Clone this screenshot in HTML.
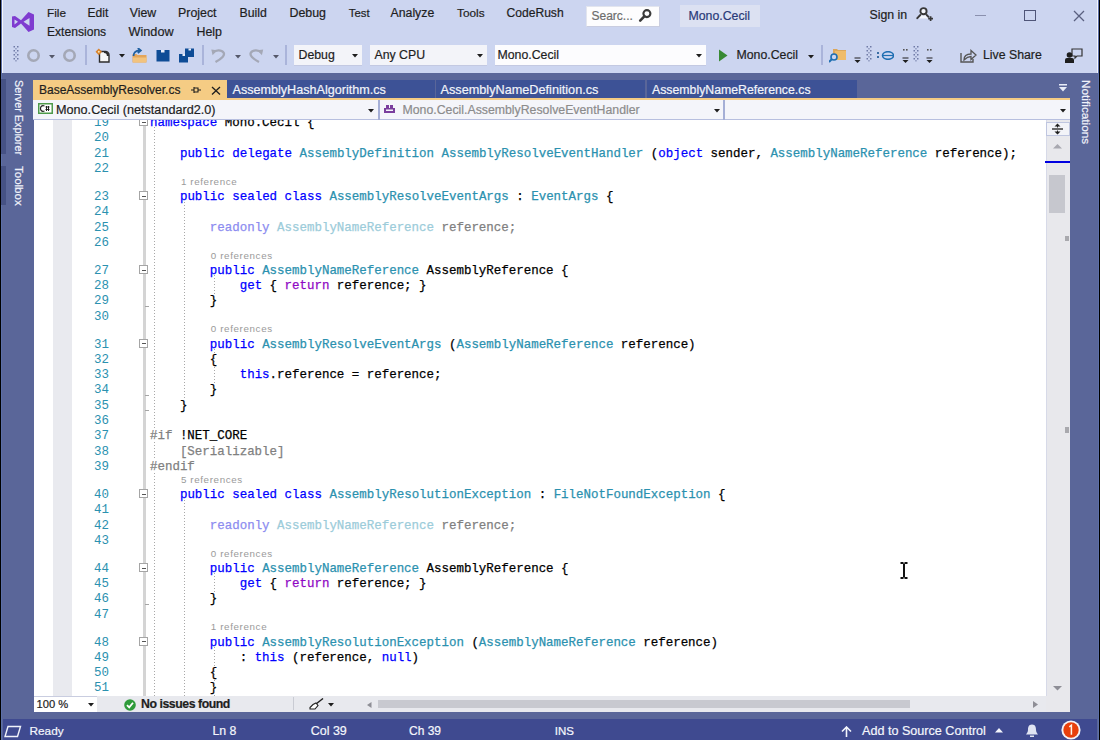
<!DOCTYPE html>
<html><head><meta charset="utf-8"><title>Visual Studio</title>
<style>
html,body{margin:0;padding:0;}
body{width:1100px;height:740px;overflow:hidden;position:relative;background:#5A6699;font-family:'Liberation Sans', sans-serif;}
body div{position:absolute;}
body div span{position:static;}
</style></head><body>
<div style="left:0px;top:0px;width:1100px;height:73px;background:#CCD5F0;"></div>
<svg style="position:absolute;left:10px;top:10px;" width="26" height="24" viewBox="0 0 26 24"><path fill="#7F3CD0" fill-rule="evenodd" d="M2,6.5 L5,6 L11,10.3 L18.5,2 L24,4.5 L24,19.5 L18.5,22 L11,13.5 L5,18 L2,17 Z M4.5,9.5 L8,11.8 L4.5,14.5 Z M13.5,11.8 L19.5,8 L19.5,15.8 Z"/></svg>
<div style="left:47px;top:6px;font-size:11.8px;line-height:14px;color:#1e1e1e;white-space:pre;font-family:'Liberation Sans', sans-serif;-webkit-text-stroke:0.2px #1e1e1e;">File</div>
<div style="left:87.5px;top:6px;font-size:12.1px;line-height:14px;color:#1e1e1e;white-space:pre;font-family:'Liberation Sans', sans-serif;-webkit-text-stroke:0.2px #1e1e1e;">Edit</div>
<div style="left:129.8px;top:6px;font-size:12.3px;line-height:14px;color:#1e1e1e;white-space:pre;font-family:'Liberation Sans', sans-serif;-webkit-text-stroke:0.2px #1e1e1e;">View</div>
<div style="left:178px;top:6px;font-size:12.4px;line-height:14px;color:#1e1e1e;white-space:pre;font-family:'Liberation Sans', sans-serif;-webkit-text-stroke:0.2px #1e1e1e;">Project</div>
<div style="left:239.5px;top:6px;font-size:12.3px;line-height:14px;color:#1e1e1e;white-space:pre;font-family:'Liberation Sans', sans-serif;-webkit-text-stroke:0.2px #1e1e1e;">Build</div>
<div style="left:289.5px;top:6px;font-size:12.4px;line-height:14px;color:#1e1e1e;white-space:pre;font-family:'Liberation Sans', sans-serif;-webkit-text-stroke:0.2px #1e1e1e;">Debug</div>
<div style="left:348.8px;top:7px;font-size:11.4px;line-height:12px;color:#1e1e1e;white-space:pre;font-family:'Liberation Sans', sans-serif;-webkit-text-stroke:0.2px #1e1e1e;">Test</div>
<div style="left:390.5px;top:6px;font-size:12.3px;line-height:14px;color:#1e1e1e;white-space:pre;font-family:'Liberation Sans', sans-serif;-webkit-text-stroke:0.2px #1e1e1e;">Analyze</div>
<div style="left:457px;top:6px;font-size:11.8px;line-height:14px;color:#1e1e1e;white-space:pre;font-family:'Liberation Sans', sans-serif;-webkit-text-stroke:0.2px #1e1e1e;">Tools</div>
<div style="left:506.5px;top:6px;font-size:12.1px;line-height:14px;color:#1e1e1e;white-space:pre;font-family:'Liberation Sans', sans-serif;-webkit-text-stroke:0.2px #1e1e1e;">CodeRush</div>
<div style="left:47px;top:25px;font-size:12.1px;line-height:14px;color:#1e1e1e;white-space:pre;font-family:'Liberation Sans', sans-serif;-webkit-text-stroke:0.2px #1e1e1e;">Extensions</div>
<div style="left:128.5px;top:25px;font-size:12.7px;line-height:14px;color:#1e1e1e;white-space:pre;font-family:'Liberation Sans', sans-serif;-webkit-text-stroke:0.2px #1e1e1e;">Window</div>
<div style="left:196.5px;top:25px;font-size:12.4px;line-height:14px;color:#1e1e1e;white-space:pre;font-family:'Liberation Sans', sans-serif;-webkit-text-stroke:0.2px #1e1e1e;">Help</div>
<div style="left:586px;top:6px;width:73.5px;height:20.5px;background:#FDFDFE;border:1px solid #E2E5EE;border-right-color:#C9CDE0;border-bottom-color:#C9CDE0;box-sizing:border-box"></div>
<div style="left:591.5px;top:9px;font-size:12px;line-height:14px;color:#6D6D6D;white-space:pre;font-family:'Liberation Sans', sans-serif;-webkit-text-stroke:0.2px #6D6D6D;">Searc...</div>
<svg style="position:absolute;left:636px;top:9px;" width="16" height="14" viewBox="0 0 16 14"><circle cx="10.9" cy="4.6" r="3.5" fill="none" stroke="#3A3A3A" stroke-width="2.1"/><path d="M8.3,7.3 L4.2,11.6" stroke="#3A3A3A" stroke-width="2.6" stroke-linecap="round"/></svg>
<div style="left:680px;top:5px;width:80px;height:22px;background:#DCE1F2;"></div>
<div style="left:688.5px;top:9px;font-size:12.3px;line-height:14px;color:#2A3A78;white-space:pre;font-family:'Liberation Sans', sans-serif;-webkit-text-stroke:0.2px #2A3A78;">Mono.Cecil</div>
<div style="left:869.5px;top:8px;font-size:12.3px;line-height:14px;color:#1e1e1e;white-space:pre;font-family:'Liberation Sans', sans-serif;-webkit-text-stroke:0.2px #1e1e1e;">Sign in</div>
<svg style="position:absolute;left:916px;top:7px;" width="19" height="16" viewBox="0 0 19 16"><path d="M2.5,11.5 L5,8.3 L10,8.3 L12,11.5 Z" fill="#F4F6FC"/><circle cx="7.5" cy="4.2" r="3.1" fill="#F4F6FC" stroke="#383838" stroke-width="1.9"/><path d="M1.3,11.2 L4.3,8 M10.7,8 L12.5,9.8" stroke="#383838" stroke-width="1.9" stroke-linecap="round"/><path d="M12.2,11.6 h4.8 M14.6,9.2 v4.8" stroke="#383838" stroke-width="1.7"/></svg>
<div style="left:975px;top:15px;width:11px;height:1px;background:#8A90AE;"></div>
<div style="left:1024px;top:10px;width:12px;height:11px;background:none;border:1.5px solid #4F5578;box-sizing:border-box"></div>
<svg style="position:absolute;left:1073px;top:10px;" width="12" height="12" viewBox="0 0 12 12"><path d="M1,1 L11,11 M11,1 L1,11" stroke="#5A6080" stroke-width="1.3"/></svg>
<div style="left:0px;top:0px;width:1px;height:740px;background:#000;"></div>
<div style="left:1px;top:0px;width:1px;height:740px;background:#5B6FA8;"></div>
<div style="left:2px;top:0px;width:1px;height:73px;background:#F4F6FC;"></div>
<div style="left:1099px;top:0px;width:1px;height:740px;background:#000;"></div>
<div style="left:1098px;top:0px;width:1px;height:740px;background:#5B6FA8;"></div>
<div style="left:1097px;top:0px;width:1px;height:73px;background:#F4F6FC;"></div>
<svg style="position:absolute;left:12.5px;top:46px;" width="6" height="18" viewBox="0 0 6 18"><rect x="0.5" y="0" width="1.5" height="1.5" fill="#6F7AA6"/><rect x="4" y="0" width="1.5" height="1.5" fill="#6F7AA6"/><rect x="2.2" y="2" width="1.5" height="1.5" fill="#8E98BE"/><rect x="0.5" y="4" width="1.5" height="1.5" fill="#6F7AA6"/><rect x="4" y="4" width="1.5" height="1.5" fill="#6F7AA6"/><rect x="2.2" y="6" width="1.5" height="1.5" fill="#8E98BE"/><rect x="0.5" y="8" width="1.5" height="1.5" fill="#6F7AA6"/><rect x="4" y="8" width="1.5" height="1.5" fill="#6F7AA6"/><rect x="2.2" y="10" width="1.5" height="1.5" fill="#8E98BE"/><rect x="0.5" y="12" width="1.5" height="1.5" fill="#6F7AA6"/><rect x="4" y="12" width="1.5" height="1.5" fill="#6F7AA6"/><rect x="2.2" y="14" width="1.5" height="1.5" fill="#8E98BE"/></svg>
<svg style="position:absolute;left:27px;top:49px;" width="14" height="13" viewBox="0 0 14 13"><circle cx="6.5" cy="6.5" r="5.2" fill="none" stroke="#A4A8B6" stroke-width="2.6"/></svg>
<svg style="position:absolute;left:48.5px;top:54.5px;" width="6" height="4" viewBox="0 0 6 4"><path d="M0,0 H6 L3.0,3.5 Z" fill="#55586A"/></svg>
<svg style="position:absolute;left:63px;top:49px;" width="14" height="13" viewBox="0 0 14 13"><circle cx="6.5" cy="6.5" r="5.2" fill="none" stroke="#A4A8B6" stroke-width="2.6"/></svg>
<div style="left:85.0px;top:45px;width:2px;height:20px;background:#AAB4DA;"></div>
<svg style="position:absolute;left:95px;top:48px;" width="16" height="15" viewBox="0 0 16 15"><path d="M4.5,3.5 h6 a3.5,3.5 0 0 1 3.5,3.5 v7 h-9.5 z" fill="#F6F6F6" stroke="#2D2D2D" stroke-width="1.4"/><path d="M9,4 a4,4 0 0 1 4,4" fill="none" stroke="#2D2D2D" stroke-width="2.2"/><path d="M3.8,0.5 L7,3.8 L3.8,7.2 L0.5,3.8 Z" fill="#D9822B"/><circle cx="3.8" cy="3.8" r="1" fill="#F6E3B0"/></svg>
<svg style="position:absolute;left:118.5px;top:54px;" width="6" height="4" viewBox="0 0 6 4"><path d="M0,0 H6 L3.0,3.5 Z" fill="#1e1e1e"/></svg>
<svg style="position:absolute;left:131px;top:48px;" width="17" height="15" viewBox="0 0 17 15"><path d="M1.5,6 h4 l1,1 h9 v7.5 h-14 z" fill="#E3A55B"/><path d="M2,9.5 h14 l-1,5 h-13 z" fill="#F2C37E"/><path d="M2.5,8 C2.5,4.5 5,2.5 8.5,2.5 M6.8,0 l3,2.5 l-3,2.5" fill="none" stroke="#1F5FA0" stroke-width="1.8"/></svg>
<svg style="position:absolute;left:156px;top:49px;" width="14" height="13" viewBox="0 0 14 13"><rect x="0.5" y="1" width="13" height="11.5" fill="#0E4C96"/><rect x="5" y="1" width="3.5" height="2.5" fill="#E8ECF8"/></svg>
<svg style="position:absolute;left:178px;top:47px;" width="17" height="16" viewBox="0 0 17 16"><rect x="7" y="1.5" width="9" height="8.5" fill="#0E4C96"/><rect x="10.5" y="1.5" width="2.5" height="2" fill="#E8ECF8"/><rect x="6" y="7" width="4" height="2" fill="#CCD5F0"/><rect x="1" y="7" width="9" height="8.5" fill="#0E4C96"/><rect x="4.5" y="7" width="2.5" height="2" fill="#E8ECF8"/></svg>
<div style="left:202.0px;top:45px;width:2px;height:20px;background:#AAB4DA;"></div>
<svg style="position:absolute;left:211px;top:49px;" width="15" height="14" viewBox="0 0 15 14"><path d="M2,3.8 C4.5,0.8 10.5,0.5 12.6,3.6 C14.2,6.3 11,9.5 4.5,13" fill="none" stroke="#A4A8B6" stroke-width="2.3"/><path d="M0.3,0.5 L6,1.2 L1.6,6.2 Z" fill="#A4A8B6"/></svg>
<svg style="position:absolute;left:235px;top:54.5px;" width="6" height="4" viewBox="0 0 6 4"><path d="M0,0 H6 L3.0,3.5 Z" fill="#55586A"/></svg>
<svg style="position:absolute;left:248.5px;top:49px;" width="15" height="14" viewBox="0 0 15 14"><g transform="translate(14.5,0) scale(-1,1)"><path d="M2,3.8 C4.5,0.8 10.5,0.5 12.6,3.6 C14.2,6.3 11,9.5 4.5,13" fill="none" stroke="#A4A8B6" stroke-width="2.3"/><path d="M0.3,0.5 L6,1.2 L1.6,6.2 Z" fill="#A4A8B6"/></g></svg>
<svg style="position:absolute;left:273px;top:54.5px;" width="6" height="4" viewBox="0 0 6 4"><path d="M0,0 H6 L3.0,3.5 Z" fill="#55586A"/></svg>
<div style="left:285.0px;top:45px;width:2px;height:20px;background:#AAB4DA;"></div>
<div style="left:294px;top:45px;width:68px;height:20.5px;background:#F3F4F9;box-shadow:inset 0 -1px 0 #C3C9E2"></div>
<div style="left:298.5px;top:48px;font-size:12.3px;line-height:14px;color:#1e1e1e;white-space:pre;font-family:'Liberation Sans', sans-serif;-webkit-text-stroke:0.2px #1e1e1e;">Debug</div>
<svg style="position:absolute;left:352px;top:53.5px;" width="6" height="4" viewBox="0 0 6 4"><path d="M0,0 H6 L3.0,3.5 Z" fill="#1e1e1e"/></svg>
<div style="left:370px;top:45px;width:116.5px;height:20.5px;background:#F3F4F9;box-shadow:inset 0 -1px 0 #C3C9E2"></div>
<div style="left:374.5px;top:48px;font-size:12.3px;line-height:14px;color:#1e1e1e;white-space:pre;font-family:'Liberation Sans', sans-serif;-webkit-text-stroke:0.2px #1e1e1e;">Any CPU</div>
<svg style="position:absolute;left:476.5px;top:53.5px;" width="6" height="4" viewBox="0 0 6 4"><path d="M0,0 H6 L3.0,3.5 Z" fill="#1e1e1e"/></svg>
<div style="left:494.5px;top:45px;width:211px;height:20.5px;background:#FCFCFE;box-shadow:inset 0 -1px 0 #C3C9E2"></div>
<div style="left:497.5px;top:48px;font-size:12.3px;line-height:14px;color:#1e1e1e;white-space:pre;font-family:'Liberation Sans', sans-serif;-webkit-text-stroke:0.2px #1e1e1e;">Mono.Cecil</div>
<svg style="position:absolute;left:695.5px;top:53.5px;" width="6" height="4" viewBox="0 0 6 4"><path d="M0,0 H6 L3.0,3.5 Z" fill="#1e1e1e"/></svg>
<svg style="position:absolute;left:718px;top:49px;" width="10" height="13" viewBox="0 0 10 13"><path d="M1,0.5 L9.5,6.5 L1,12.5 Z" fill="#388A34"/></svg>
<div style="left:736.5px;top:48px;font-size:12.3px;line-height:14px;color:#1e1e1e;white-space:pre;font-family:'Liberation Sans', sans-serif;-webkit-text-stroke:0.2px #1e1e1e;">Mono.Cecil</div>
<svg style="position:absolute;left:808px;top:55px;" width="6" height="4" viewBox="0 0 6 4"><path d="M0,0 H6 L3.0,3.5 Z" fill="#1e1e1e"/></svg>
<div style="left:820.5px;top:45px;width:2px;height:20px;background:#AAB4DA;"></div>
<svg style="position:absolute;left:829px;top:47px;" width="18" height="16" viewBox="0 0 18 16"><path d="M4,2 h4 l1,1 h8 v10 h-13z" fill="#DCA75A"/><path d="M6,4 h11 v9 h-11z" fill="#EFBC6A"/><circle cx="5" cy="10" r="3" fill="#CCD5F0" stroke="#1F6FB2" stroke-width="1.6"/><path d="M3,12 l-3,3" stroke="#1F6FB2" stroke-width="2"/></svg>
<svg style="position:absolute;left:853.5px;top:48px;" width="7" height="16" viewBox="0 0 7 16"><rect x="0.5" y="9.5" width="6" height="1" fill="#1e1e1e"/><path d="M0.5,12 h6 l-3,3z" fill="#1e1e1e"/></svg>
<svg style="position:absolute;left:865.5px;top:46px;" width="6" height="18" viewBox="0 0 6 18"><rect x="0.5" y="0" width="1.5" height="1.5" fill="#6F7AA6"/><rect x="4" y="0" width="1.5" height="1.5" fill="#6F7AA6"/><rect x="2.2" y="2" width="1.5" height="1.5" fill="#8E98BE"/><rect x="0.5" y="4" width="1.5" height="1.5" fill="#6F7AA6"/><rect x="4" y="4" width="1.5" height="1.5" fill="#6F7AA6"/><rect x="2.2" y="6" width="1.5" height="1.5" fill="#8E98BE"/><rect x="0.5" y="8" width="1.5" height="1.5" fill="#6F7AA6"/><rect x="4" y="8" width="1.5" height="1.5" fill="#6F7AA6"/><rect x="2.2" y="10" width="1.5" height="1.5" fill="#8E98BE"/><rect x="0.5" y="12" width="1.5" height="1.5" fill="#6F7AA6"/><rect x="4" y="12" width="1.5" height="1.5" fill="#6F7AA6"/><rect x="2.2" y="14" width="1.5" height="1.5" fill="#8E98BE"/></svg>
<svg style="position:absolute;left:877px;top:51px;" width="17" height="9" viewBox="0 0 17 9"><rect x="0" y="1" width="2" height="2" fill="#3b6ea5"/><rect x="0" y="5" width="2" height="2" fill="#3b6ea5"/><ellipse cx="11" cy="4.5" rx="5.5" ry="3.8" fill="none" stroke="#1F6FB2" stroke-width="1.6"/><path d="M6,4.5 h10" stroke="#1F6FB2" stroke-width="1.2"/></svg>
<svg style="position:absolute;left:902px;top:48px;" width="7" height="16" viewBox="0 0 7 16"><rect x="1" y="1" width="1.6" height="1.6" fill="#555"/><rect x="4" y="1" width="1.6" height="1.6" fill="#555"/><rect x="0.5" y="9.5" width="6" height="1" fill="#1e1e1e"/><path d="M0.5,12 h6 l-3,3z" fill="#1e1e1e"/></svg>
<svg style="position:absolute;left:913px;top:46px;" width="6" height="18" viewBox="0 0 6 18"><rect x="0.5" y="0" width="1.5" height="1.5" fill="#6F7AA6"/><rect x="4" y="0" width="1.5" height="1.5" fill="#6F7AA6"/><rect x="2.2" y="2" width="1.5" height="1.5" fill="#8E98BE"/><rect x="0.5" y="4" width="1.5" height="1.5" fill="#6F7AA6"/><rect x="4" y="4" width="1.5" height="1.5" fill="#6F7AA6"/><rect x="2.2" y="6" width="1.5" height="1.5" fill="#8E98BE"/><rect x="0.5" y="8" width="1.5" height="1.5" fill="#6F7AA6"/><rect x="4" y="8" width="1.5" height="1.5" fill="#6F7AA6"/><rect x="2.2" y="10" width="1.5" height="1.5" fill="#8E98BE"/><rect x="0.5" y="12" width="1.5" height="1.5" fill="#6F7AA6"/><rect x="4" y="12" width="1.5" height="1.5" fill="#6F7AA6"/><rect x="2.2" y="14" width="1.5" height="1.5" fill="#8E98BE"/></svg>
<svg style="position:absolute;left:925.5px;top:48px;" width="7" height="16" viewBox="0 0 7 16"><rect x="1" y="1" width="1.6" height="1.6" fill="#555"/><rect x="4" y="1" width="1.6" height="1.6" fill="#555"/><rect x="0.5" y="9.5" width="6" height="1" fill="#1e1e1e"/><path d="M0.5,12 h6 l-3,3z" fill="#1e1e1e"/></svg>
<svg style="position:absolute;left:960px;top:49px;" width="17" height="14" viewBox="0 0 17 14"><path d="M1,4 v9 h12 v-3" fill="none" stroke="#555" stroke-width="1.4"/><path d="M4,11 C4,7 7,5 11,5 v-3.5 l5,4.5 l-5,4.5 v-3 C8,7.5 6,9 4,11z" fill="none" stroke="#555" stroke-width="1.3"/></svg>
<div style="left:983px;top:48px;font-size:12.3px;line-height:14px;color:#1e1e1e;white-space:pre;font-family:'Liberation Sans', sans-serif;-webkit-text-stroke:0.2px #1e1e1e;">Live Share</div>
<svg style="position:absolute;left:1065px;top:48px;" width="18" height="15" viewBox="0 0 18 15"><path d="M7,1 h10 v7 h-5 l-2,2 v-2 h-3z" fill="none" stroke="#333" stroke-width="1.2"/><circle cx="4.5" cy="7" r="2.8" fill="#1e1e1e"/><path d="M0,15 v-3 a2,2 0 0 1 2,-2 h5 a2,2 0 0 1 2,2 v3z" fill="#1e1e1e"/></svg>
<div style="left:3px;top:73px;width:1094px;height:667px;background:#5A6699;"></div>
<div style="left:1px;top:79px;width:4.5px;height:75px;background:#465285;"></div>
<div style="left:1px;top:166px;width:4.5px;height:39px;background:#465285;"></div>
<div style="left:12px;top:80px;width:16px;height:90px;"><div style="position:absolute;left:0;top:0;transform-origin:0 0;transform:translate(14px,0) rotate(90deg);font-size:10.8px;line-height:14px;color:#F0F2FA;white-space:pre;font-family:'Liberation Sans', sans-serif;-webkit-text-stroke:0.2px #F0F2FA">Server Explorer</div></div>
<div style="left:12px;top:166px;width:16px;height:90px;"><div style="position:absolute;left:0;top:0;transform-origin:0 0;transform:translate(14px,0) rotate(90deg);font-size:11.5px;line-height:14px;color:#F0F2FA;white-space:pre;font-family:'Liberation Sans', sans-serif;-webkit-text-stroke:0.2px #F0F2FA">Toolbox</div></div>
<div style="left:1078.5px;top:80px;width:16px;height:90px;"><div style="position:absolute;left:0;top:0;transform-origin:0 0;transform:translate(14px,0) rotate(90deg);font-size:11.8px;line-height:14px;color:#F0F2FA;white-space:pre;font-family:'Liberation Sans', sans-serif;-webkit-text-stroke:0.2px #F0F2FA">Notifications</div></div>
<div style="left:33px;top:79.5px;width:194px;height:19.5px;background:#F5CC84;"></div>
<div style="left:39px;top:83px;font-size:12.0px;line-height:14px;color:#1e1e1e;white-space:pre;font-family:'Liberation Sans', sans-serif;-webkit-text-stroke:0.2px #1e1e1e;">BaseAssemblyResolver.cs</div>
<svg style="position:absolute;left:191px;top:86px;" width="10" height="9" viewBox="0 0 10 9"><path d="M0,4 h3 M3,1 v6 M3,2 h4 v4 h-4 M7,4 h3" stroke="#1e1e1e" stroke-width="1.1" fill="none"/></svg>
<svg style="position:absolute;left:210.5px;top:85.5px;" width="10" height="9" viewBox="0 0 10 9"><path d="M1,1 L9,8.5 M9,1 L1,8.5" stroke="#1e1e1e" stroke-width="1.3"/></svg>
<div style="left:227px;top:80.0px;width:207.5px;height:18.5px;background:#3D5296;"></div>
<div style="left:232.5px;top:83px;font-size:12.6px;line-height:14px;color:#F2F4FA;white-space:pre;font-family:'Liberation Sans', sans-serif;-webkit-text-stroke:0.2px #F2F4FA;">AssemblyHashAlgorithm.cs</div>
<div style="left:435.5px;top:80.0px;width:209.5px;height:18.5px;background:#3D5296;"></div>
<div style="left:440.5px;top:83px;font-size:12.7px;line-height:14px;color:#F2F4FA;white-space:pre;font-family:'Liberation Sans', sans-serif;-webkit-text-stroke:0.2px #F2F4FA;">AssemblyNameDefinition.cs</div>
<div style="left:647px;top:80.0px;width:209.5px;height:18.5px;background:#3D5296;"></div>
<div style="left:652px;top:83px;font-size:12.3px;line-height:14px;color:#F2F4FA;white-space:pre;font-family:'Liberation Sans', sans-serif;-webkit-text-stroke:0.2px #F2F4FA;">AssemblyNameReference.cs</div>
<svg style="position:absolute;left:1059px;top:84px;" width="8" height="8" viewBox="0 0 8 8"><rect x="0" y="0" width="8" height="1.5" fill="#E8ECF8"/><path d="M0,3 h8 l-4,4.5z" fill="#E8ECF8"/></svg>
<div style="left:33px;top:97.8px;width:1036.5px;height:2.2px;background:#F5CC84;"></div>
<div style="left:33px;top:100px;width:1036.5px;height:20px;background:#F4F5FA;"></div>
<div style="left:33px;top:119px;width:1036.5px;height:1.2px;background:#B7BFDF;"></div>
<svg style="position:absolute;left:38px;top:103px;" width="15" height="11" viewBox="0 0 15 11"><rect x="0.75" y="0.75" width="13.5" height="9.5" fill="#fff" stroke="#4E9A4B" stroke-width="1.5"/><path d="M6.5,3 C3.5,2 2.5,4 2.5,5.5 C2.5,7 3.5,9 6.5,8" fill="none" stroke="#1e1e1e" stroke-width="1.2"/><path d="M7.5,4 h4 M7.5,6.5 h4 M8.5,3 v5 M10.5,3 v5" stroke="#1e1e1e" stroke-width="1"/></svg>
<div style="left:56px;top:103px;font-size:12.65px;line-height:14px;color:#1e1e1e;white-space:pre;font-family:'Liberation Sans', sans-serif;-webkit-text-stroke:0.2px #1e1e1e;">Mono.Cecil (netstandard2.0)</div>
<svg style="position:absolute;left:368px;top:108.5px;" width="6" height="4" viewBox="0 0 6 4"><path d="M0,0 H6 L3.0,3.5 Z" fill="#1e1e1e"/></svg>
<div style="left:377.5px;top:100px;width:2px;height:19.5px;background:#A5AFD6;"></div>
<svg style="position:absolute;left:383px;top:103px;" width="13" height="11" viewBox="0 0 13 11"><path d="M1,5 h11 v5 h-11z M3,5 v-3 h3 v3 M7,5 v-3 h3 v3" fill="#7A3E9D"/><rect x="3" y="6.5" width="7" height="1.5" fill="#F4F5FA"/></svg>
<div style="left:402.5px;top:103px;font-size:12.3px;line-height:14px;color:#8C8C8C;white-space:pre;font-family:'Liberation Sans', sans-serif;-webkit-text-stroke:0.2px #8C8C8C;">Mono.Cecil.AssemblyResolveEventHandler</div>
<svg style="position:absolute;left:714px;top:108.5px;" width="6" height="4" viewBox="0 0 6 4"><path d="M0,0 H6 L3.0,3.5 Z" fill="#1e1e1e"/></svg>
<div style="left:723px;top:100px;width:2px;height:19.5px;background:#A5AFD6;"></div>
<svg style="position:absolute;left:1060px;top:108.5px;" width="6" height="4" viewBox="0 0 6 4"><path d="M0,0 H6 L3.0,3.5 Z" fill="#1e1e1e"/></svg>
<div style="left:34px;top:120px;width:1011.5px;height:575.6px;background:#FFFFFF;"></div>
<div style="left:53px;top:120px;width:18.5px;height:575.6px;background:#E9EAEF;"></div>
<div style="left:34px;top:120px;width:1011.5px;height:575.6px;overflow:hidden">
<div style="left:109px;top:6px;width:2.5px;height:569.6px;background:#D4D4D4"></div>
<div style="left:60.00px;top:-4.00px;font-size:12.46px;line-height:14px;color:#2B91AF;white-space:pre;font-family:'Liberation Mono', monospace;">19</div>
<div style="left:116.00px;top:-4.00px;font-size:12.46px;line-height:14px;color:#000000;white-space:pre;font-family:'Liberation Mono', monospace;-webkit-text-stroke:0.25px currentColor"><span style="color:#0000FF">namespace</span><span style="color:#000000"> Mono.Cecil {</span></div>
<div style="left:60.00px;top:11.00px;font-size:12.46px;line-height:14px;color:#2B91AF;white-space:pre;font-family:'Liberation Mono', monospace;">20</div>
<div style="left:60.00px;top:27.00px;font-size:12.46px;line-height:14px;color:#2B91AF;white-space:pre;font-family:'Liberation Mono', monospace;">21</div>
<div style="left:116.00px;top:27.00px;font-size:12.46px;line-height:14px;color:#000000;white-space:pre;font-family:'Liberation Mono', monospace;-webkit-text-stroke:0.25px currentColor"><span style="color:#000000">    </span><span style="color:#0000FF">public</span><span style="color:#000000"> </span><span style="color:#0000FF">delegate</span><span style="color:#000000"> </span><span style="color:#2B91AF">AssemblyDefinition</span><span style="color:#000000"> </span><span style="color:#2B91AF">AssemblyResolveEventHandler</span><span style="color:#000000"> (</span><span style="color:#0000FF">object</span><span style="color:#000000"> sender, </span><span style="color:#2B91AF">AssemblyNameReference</span><span style="color:#000000"> reference);</span></div>
<div style="left:60.00px;top:42.00px;font-size:12.46px;line-height:14px;color:#2B91AF;white-space:pre;font-family:'Liberation Mono', monospace;">22</div>
<div style="left:60.00px;top:70.00px;font-size:12.46px;line-height:14px;color:#2B91AF;white-space:pre;font-family:'Liberation Mono', monospace;">23</div>
<div style="left:116.00px;top:70.00px;font-size:12.46px;line-height:14px;color:#000000;white-space:pre;font-family:'Liberation Mono', monospace;-webkit-text-stroke:0.25px currentColor"><span style="color:#000000">    </span><span style="color:#0000FF">public</span><span style="color:#000000"> </span><span style="color:#0000FF">sealed</span><span style="color:#000000"> </span><span style="color:#0000FF">class</span><span style="color:#000000"> </span><span style="color:#2B91AF">AssemblyResolveEventArgs</span><span style="color:#000000"> : </span><span style="color:#2B91AF">EventArgs</span><span style="color:#000000"> {</span></div>
<div style="left:60.00px;top:85.00px;font-size:12.46px;line-height:14px;color:#2B91AF;white-space:pre;font-family:'Liberation Mono', monospace;">24</div>
<div style="left:60.00px;top:101.00px;font-size:12.46px;line-height:14px;color:#2B91AF;white-space:pre;font-family:'Liberation Mono', monospace;">25</div>
<div style="left:116.00px;top:101.00px;font-size:12.46px;line-height:14px;color:#000000;white-space:pre;font-family:'Liberation Mono', monospace;-webkit-text-stroke:0.25px currentColor"><span style="color:#000000">        </span><span style="color:#8C8CF0">readonly</span><span style="color:#000000"> </span><span style="color:#9CCCDA">AssemblyNameReference</span><span style="color:#808080"> reference;</span></div>
<div style="left:60.00px;top:116.00px;font-size:12.46px;line-height:14px;color:#2B91AF;white-space:pre;font-family:'Liberation Mono', monospace;">26</div>
<div style="left:60.00px;top:144.00px;font-size:12.46px;line-height:14px;color:#2B91AF;white-space:pre;font-family:'Liberation Mono', monospace;">27</div>
<div style="left:116.00px;top:144.00px;font-size:12.46px;line-height:14px;color:#000000;white-space:pre;font-family:'Liberation Mono', monospace;-webkit-text-stroke:0.25px currentColor"><span style="color:#000000">        </span><span style="color:#0000FF">public</span><span style="color:#000000"> </span><span style="color:#2B91AF">AssemblyNameReference</span><span style="color:#000000"> AssemblyReference {</span></div>
<div style="left:60.00px;top:159.00px;font-size:12.46px;line-height:14px;color:#2B91AF;white-space:pre;font-family:'Liberation Mono', monospace;">28</div>
<div style="left:116.00px;top:159.00px;font-size:12.46px;line-height:14px;color:#000000;white-space:pre;font-family:'Liberation Mono', monospace;-webkit-text-stroke:0.25px currentColor"><span style="color:#000000">            </span><span style="color:#0000FF">get</span><span style="color:#000000"> { </span><span style="color:#8F08C4">return</span><span style="color:#000000"> reference; }</span></div>
<div style="left:60.00px;top:174.00px;font-size:12.46px;line-height:14px;color:#2B91AF;white-space:pre;font-family:'Liberation Mono', monospace;">29</div>
<div style="left:116.00px;top:174.00px;font-size:12.46px;line-height:14px;color:#000000;white-space:pre;font-family:'Liberation Mono', monospace;-webkit-text-stroke:0.25px currentColor"><span style="color:#000000">        }</span></div>
<div style="left:60.00px;top:190.00px;font-size:12.46px;line-height:14px;color:#2B91AF;white-space:pre;font-family:'Liberation Mono', monospace;">30</div>
<div style="left:60.00px;top:218.00px;font-size:12.46px;line-height:14px;color:#2B91AF;white-space:pre;font-family:'Liberation Mono', monospace;">31</div>
<div style="left:116.00px;top:218.00px;font-size:12.46px;line-height:14px;color:#000000;white-space:pre;font-family:'Liberation Mono', monospace;-webkit-text-stroke:0.25px currentColor"><span style="color:#000000">        </span><span style="color:#0000FF">public</span><span style="color:#000000"> </span><span style="color:#2B91AF">AssemblyResolveEventArgs</span><span style="color:#000000"> (</span><span style="color:#2B91AF">AssemblyNameReference</span><span style="color:#000000"> reference)</span></div>
<div style="left:60.00px;top:233.00px;font-size:12.46px;line-height:14px;color:#2B91AF;white-space:pre;font-family:'Liberation Mono', monospace;">32</div>
<div style="left:116.00px;top:233.00px;font-size:12.46px;line-height:14px;color:#000000;white-space:pre;font-family:'Liberation Mono', monospace;-webkit-text-stroke:0.25px currentColor"><span style="color:#000000">        {</span></div>
<div style="left:60.00px;top:248.00px;font-size:12.46px;line-height:14px;color:#2B91AF;white-space:pre;font-family:'Liberation Mono', monospace;">33</div>
<div style="left:116.00px;top:248.00px;font-size:12.46px;line-height:14px;color:#000000;white-space:pre;font-family:'Liberation Mono', monospace;-webkit-text-stroke:0.25px currentColor"><span style="color:#000000">            </span><span style="color:#0000FF">this</span><span style="color:#000000">.reference = reference;</span></div>
<div style="left:60.00px;top:263.00px;font-size:12.46px;line-height:14px;color:#2B91AF;white-space:pre;font-family:'Liberation Mono', monospace;">34</div>
<div style="left:116.00px;top:263.00px;font-size:12.46px;line-height:14px;color:#000000;white-space:pre;font-family:'Liberation Mono', monospace;-webkit-text-stroke:0.25px currentColor"><span style="color:#000000">        }</span></div>
<div style="left:60.00px;top:279.00px;font-size:12.46px;line-height:14px;color:#2B91AF;white-space:pre;font-family:'Liberation Mono', monospace;">35</div>
<div style="left:116.00px;top:279.00px;font-size:12.46px;line-height:14px;color:#000000;white-space:pre;font-family:'Liberation Mono', monospace;-webkit-text-stroke:0.25px currentColor"><span style="color:#000000">    }</span></div>
<div style="left:60.00px;top:294.00px;font-size:12.46px;line-height:14px;color:#2B91AF;white-space:pre;font-family:'Liberation Mono', monospace;">36</div>
<div style="left:60.00px;top:309.00px;font-size:12.46px;line-height:14px;color:#2B91AF;white-space:pre;font-family:'Liberation Mono', monospace;">37</div>
<div style="left:116.00px;top:309.00px;font-size:12.46px;line-height:14px;color:#000000;white-space:pre;font-family:'Liberation Mono', monospace;-webkit-text-stroke:0.25px currentColor"><span style="color:#808080">#if</span><span style="color:#000000"> !NET_CORE</span></div>
<div style="left:60.00px;top:325.00px;font-size:12.46px;line-height:14px;color:#2B91AF;white-space:pre;font-family:'Liberation Mono', monospace;">38</div>
<div style="left:116.00px;top:325.00px;font-size:12.46px;line-height:14px;color:#000000;white-space:pre;font-family:'Liberation Mono', monospace;-webkit-text-stroke:0.25px currentColor"><span style="color:#808080">    [Serializable]</span></div>
<div style="left:60.00px;top:340.00px;font-size:12.46px;line-height:14px;color:#2B91AF;white-space:pre;font-family:'Liberation Mono', monospace;">39</div>
<div style="left:116.00px;top:340.00px;font-size:12.46px;line-height:14px;color:#000000;white-space:pre;font-family:'Liberation Mono', monospace;-webkit-text-stroke:0.25px currentColor"><span style="color:#808080">#endif</span></div>
<div style="left:60.00px;top:368.00px;font-size:12.46px;line-height:14px;color:#2B91AF;white-space:pre;font-family:'Liberation Mono', monospace;">40</div>
<div style="left:116.00px;top:368.00px;font-size:12.46px;line-height:14px;color:#000000;white-space:pre;font-family:'Liberation Mono', monospace;-webkit-text-stroke:0.25px currentColor"><span style="color:#000000">    </span><span style="color:#0000FF">public</span><span style="color:#000000"> </span><span style="color:#0000FF">sealed</span><span style="color:#000000"> </span><span style="color:#0000FF">class</span><span style="color:#000000"> </span><span style="color:#2B91AF">AssemblyResolutionException</span><span style="color:#000000"> : </span><span style="color:#2B91AF">FileNotFoundException</span><span style="color:#000000"> {</span></div>
<div style="left:60.00px;top:383.00px;font-size:12.46px;line-height:14px;color:#2B91AF;white-space:pre;font-family:'Liberation Mono', monospace;">41</div>
<div style="left:60.00px;top:399.00px;font-size:12.46px;line-height:14px;color:#2B91AF;white-space:pre;font-family:'Liberation Mono', monospace;">42</div>
<div style="left:116.00px;top:399.00px;font-size:12.46px;line-height:14px;color:#000000;white-space:pre;font-family:'Liberation Mono', monospace;-webkit-text-stroke:0.25px currentColor"><span style="color:#000000">        </span><span style="color:#8C8CF0">readonly</span><span style="color:#000000"> </span><span style="color:#9CCCDA">AssemblyNameReference</span><span style="color:#808080"> reference;</span></div>
<div style="left:60.00px;top:414.00px;font-size:12.46px;line-height:14px;color:#2B91AF;white-space:pre;font-family:'Liberation Mono', monospace;">43</div>
<div style="left:60.00px;top:442.00px;font-size:12.46px;line-height:14px;color:#2B91AF;white-space:pre;font-family:'Liberation Mono', monospace;">44</div>
<div style="left:116.00px;top:442.00px;font-size:12.46px;line-height:14px;color:#000000;white-space:pre;font-family:'Liberation Mono', monospace;-webkit-text-stroke:0.25px currentColor"><span style="color:#000000">        </span><span style="color:#0000FF">public</span><span style="color:#000000"> </span><span style="color:#2B91AF">AssemblyNameReference</span><span style="color:#000000"> AssemblyReference {</span></div>
<div style="left:60.00px;top:457.00px;font-size:12.46px;line-height:14px;color:#2B91AF;white-space:pre;font-family:'Liberation Mono', monospace;">45</div>
<div style="left:116.00px;top:457.00px;font-size:12.46px;line-height:14px;color:#000000;white-space:pre;font-family:'Liberation Mono', monospace;-webkit-text-stroke:0.25px currentColor"><span style="color:#000000">            </span><span style="color:#0000FF">get</span><span style="color:#000000"> { </span><span style="color:#8F08C4">return</span><span style="color:#000000"> reference; }</span></div>
<div style="left:60.00px;top:472.00px;font-size:12.46px;line-height:14px;color:#2B91AF;white-space:pre;font-family:'Liberation Mono', monospace;">46</div>
<div style="left:116.00px;top:472.00px;font-size:12.46px;line-height:14px;color:#000000;white-space:pre;font-family:'Liberation Mono', monospace;-webkit-text-stroke:0.25px currentColor"><span style="color:#000000">        }</span></div>
<div style="left:60.00px;top:488.00px;font-size:12.46px;line-height:14px;color:#2B91AF;white-space:pre;font-family:'Liberation Mono', monospace;">47</div>
<div style="left:60.00px;top:516.00px;font-size:12.46px;line-height:14px;color:#2B91AF;white-space:pre;font-family:'Liberation Mono', monospace;">48</div>
<div style="left:116.00px;top:516.00px;font-size:12.46px;line-height:14px;color:#000000;white-space:pre;font-family:'Liberation Mono', monospace;-webkit-text-stroke:0.25px currentColor"><span style="color:#000000">        </span><span style="color:#0000FF">public</span><span style="color:#000000"> </span><span style="color:#2B91AF">AssemblyResolutionException</span><span style="color:#000000"> (</span><span style="color:#2B91AF">AssemblyNameReference</span><span style="color:#000000"> reference)</span></div>
<div style="left:60.00px;top:531.00px;font-size:12.46px;line-height:14px;color:#2B91AF;white-space:pre;font-family:'Liberation Mono', monospace;">49</div>
<div style="left:116.00px;top:531.00px;font-size:12.46px;line-height:14px;color:#000000;white-space:pre;font-family:'Liberation Mono', monospace;-webkit-text-stroke:0.25px currentColor"><span style="color:#000000">            : </span><span style="color:#0000FF">this</span><span style="color:#000000"> (reference, </span><span style="color:#0000FF">null</span><span style="color:#000000">)</span></div>
<div style="left:60.00px;top:546.00px;font-size:12.46px;line-height:14px;color:#2B91AF;white-space:pre;font-family:'Liberation Mono', monospace;">50</div>
<div style="left:116.00px;top:546.00px;font-size:12.46px;line-height:14px;color:#000000;white-space:pre;font-family:'Liberation Mono', monospace;-webkit-text-stroke:0.25px currentColor"><span style="color:#000000">        {</span></div>
<div style="left:60.00px;top:561.00px;font-size:12.46px;line-height:14px;color:#2B91AF;white-space:pre;font-family:'Liberation Mono', monospace;">51</div>
<div style="left:116.00px;top:561.00px;font-size:12.46px;line-height:14px;color:#000000;white-space:pre;font-family:'Liberation Mono', monospace;-webkit-text-stroke:0.25px currentColor"><span style="color:#000000">        }</span></div>
<div style="left:146.92px;top:56.00px;font-size:9.8px;line-height:11px;color:#9A9A9A;white-space:pre;font-family:'Liberation Sans', sans-serif;letter-spacing:0.62px">1 reference</div>
<div style="left:176.84px;top:130.00px;font-size:9.8px;line-height:11px;color:#9A9A9A;white-space:pre;font-family:'Liberation Sans', sans-serif;letter-spacing:0.62px">0 references</div>
<div style="left:176.84px;top:203.00px;font-size:9.8px;line-height:11px;color:#9A9A9A;white-space:pre;font-family:'Liberation Sans', sans-serif;letter-spacing:0.62px">0 references</div>
<div style="left:146.92px;top:354.00px;font-size:9.8px;line-height:11px;color:#9A9A9A;white-space:pre;font-family:'Liberation Sans', sans-serif;letter-spacing:0.62px">5 references</div>
<div style="left:176.84px;top:428.00px;font-size:9.8px;line-height:11px;color:#9A9A9A;white-space:pre;font-family:'Liberation Sans', sans-serif;letter-spacing:0.62px">0 references</div>
<div style="left:176.84px;top:501.00px;font-size:9.8px;line-height:11px;color:#9A9A9A;white-space:pre;font-family:'Liberation Sans', sans-serif;letter-spacing:0.62px">1 reference</div>
<div style="left:105px;top:-2.6px;width:9px;height:9px;box-sizing:border-box;border:1px solid #A5A5A5;background:#fff"><div style="position:absolute;left:1.5px;top:3.5px;width:4px;height:1px;background:#555"></div></div>
<div style="left:105px;top:71.2px;width:9px;height:9px;box-sizing:border-box;border:1px solid #A5A5A5;background:#fff"><div style="position:absolute;left:1.5px;top:3.5px;width:4px;height:1px;background:#555"></div></div>
<div style="left:105px;top:145.0px;width:9px;height:9px;box-sizing:border-box;border:1px solid #A5A5A5;background:#fff"><div style="position:absolute;left:1.5px;top:3.5px;width:4px;height:1px;background:#555"></div></div>
<div style="left:105px;top:218.8px;width:9px;height:9px;box-sizing:border-box;border:1px solid #A5A5A5;background:#fff"><div style="position:absolute;left:1.5px;top:3.5px;width:4px;height:1px;background:#555"></div></div>
<div style="left:105px;top:369.2px;width:9px;height:9px;box-sizing:border-box;border:1px solid #A5A5A5;background:#fff"><div style="position:absolute;left:1.5px;top:3.5px;width:4px;height:1px;background:#555"></div></div>
<div style="left:105px;top:443.0px;width:9px;height:9px;box-sizing:border-box;border:1px solid #A5A5A5;background:#fff"><div style="position:absolute;left:1.5px;top:3.5px;width:4px;height:1px;background:#555"></div></div>
<div style="left:105px;top:516.8px;width:9px;height:9px;box-sizing:border-box;border:1px solid #A5A5A5;background:#fff"><div style="position:absolute;left:1.5px;top:3.5px;width:4px;height:1px;background:#555"></div></div>
<div style="left:111px;top:186.0px;width:4px;height:1px;background:#A5A5A5"></div>
<div style="left:111px;top:275.1px;width:4px;height:1px;background:#A5A5A5"></div>
<div style="left:111px;top:290.4px;width:4px;height:1px;background:#A5A5A5"></div>
<div style="left:111px;top:484.0px;width:4px;height:1px;background:#A5A5A5"></div>
<div style="left:120px;top:7.0px;width:1px;height:301.1px;background:repeating-linear-gradient(to bottom,#A8A8A8 0 1px,transparent 1px 3px)"></div>
<div style="left:120px;top:322.1px;width:1px;height:16.6px;background:repeating-linear-gradient(to bottom,#A8A8A8 0 1px,transparent 1px 3px)"></div>
<div style="left:120px;top:352.7px;width:1px;height:222.9px;background:repeating-linear-gradient(to bottom,#A8A8A8 0 1px,transparent 1px 3px)"></div>
<div style="left:149.5px;top:81.5px;width:1px;height:196.9px;background:repeating-linear-gradient(to bottom,#A8A8A8 0 1px,transparent 1px 3px)"></div>
<div style="left:149.5px;top:379.5px;width:1px;height:196.1px;background:repeating-linear-gradient(to bottom,#A8A8A8 0 1px,transparent 1px 3px)"></div>
<div style="left:179.5px;top:155.3px;width:1px;height:18.6px;background:repeating-linear-gradient(to bottom,#A8A8A8 0 1px,transparent 1px 3px)"></div>
<div style="left:179.5px;top:229.1px;width:1px;height:34.0px;background:repeating-linear-gradient(to bottom,#A8A8A8 0 1px,transparent 1px 3px)"></div>
<div style="left:179.5px;top:453.3px;width:1px;height:18.6px;background:repeating-linear-gradient(to bottom,#A8A8A8 0 1px,transparent 1px 3px)"></div>
<div style="left:179.5px;top:527.1px;width:1px;height:48.5px;background:repeating-linear-gradient(to bottom,#A8A8A8 0 1px,transparent 1px 3px)"></div>
</div>
<svg style="position:absolute;left:900px;top:562px;" width="9" height="17" viewBox="0 0 9 17"><rect x="3" y="1.5" width="2" height="14" fill="#111"/><rect x="0.5" y="0" width="3" height="2" fill="#111"/><rect x="4.5" y="0" width="3" height="2" fill="#111"/><rect x="0.5" y="15" width="3" height="2" fill="#111"/><rect x="4.5" y="15" width="3" height="2" fill="#111"/></svg>
<div style="left:1045.5px;top:120px;width:24px;height:591.6px;background:#E8E8EC;"></div>
<div style="left:1045.5px;top:120px;width:1px;height:575.6px;background:#D7DAE8;"></div>
<div style="left:1045.5px;top:121.5px;width:24px;height:14.5px;background:#F2F3F8;border:1px solid #BFC6E0;box-sizing:border-box"></div>
<svg style="position:absolute;left:1051px;top:123px;" width="13" height="12" viewBox="0 0 13 12"><path d="M1,6 h11" stroke="#1e1e1e" stroke-width="1.3"/><path d="M6.5,0.5 l-3,3 h6z M6.5,11.5 l-3,-3 h6z" fill="#1e1e1e"/><path d="M6.5,3 v1.5 M6.5,7.5 v1.5" stroke="#1e1e1e" stroke-width="1"/></svg>
<svg style="position:absolute;left:1053px;top:144px;" width="9" height="5" viewBox="0 0 9 5"><path d="M0,4.5 L4.5,0 L9,4.5z" fill="#A8A8B0"/></svg>
<div style="left:1045px;top:161.3px;width:24.5px;height:2px;background:#0000E0;"></div>
<div style="left:1049.2px;top:174.8px;width:16px;height:38.4px;background:#C6C7CE;"></div>
<div style="left:1064.7px;top:235.6px;width:4.6px;height:5.7px;background:#A9A9AE;"></div>
<div style="left:1064.7px;top:427px;width:4.6px;height:5.7px;background:#A9A9AE;"></div>
<svg style="position:absolute;left:1052.5px;top:685.5px;" width="9" height="5" viewBox="0 0 9 5"><path d="M0,0 L9,0 L4.5,4.5z" fill="#8E8E96"/></svg>
<div style="left:34px;top:695.6px;width:1011.5px;height:16.2px;background:#E8E9EE;"></div>
<div style="left:34px;top:695.6px;width:62.5px;height:16.2px;background:#FFFFFF;box-shadow:inset 0 1px 0 #C9CDE0"></div>
<div style="left:36.5px;top:698px;font-size:11.2px;line-height:12px;color:#1e1e1e;white-space:pre;font-family:'Liberation Sans', sans-serif;-webkit-text-stroke:0.2px #1e1e1e;">100 %</div>
<svg style="position:absolute;left:87.5px;top:703px;" width="6" height="4" viewBox="0 0 6 4"><path d="M0,0 H6 L3.0,3.5 Z" fill="#1e1e1e"/></svg>
<svg style="position:absolute;left:123.5px;top:698.8px;" width="12" height="12" viewBox="0 0 12 12"><circle cx="6" cy="6" r="5.8" fill="#2E9B3A"/><path d="M3,6.2 L5.2,8.4 L9,3.8" fill="none" stroke="#fff" stroke-width="1.8"/></svg>
<div style="left:141px;top:697px;font-size:12.3px;line-height:14px;color:#1e1e1e;white-space:pre;font-family:'Liberation Sans', sans-serif;-webkit-text-stroke:0.2px #1e1e1e;font-weight:bold;letter-spacing:-0.45px">No issues found</div>
<div style="left:293px;top:697px;width:1px;height:13px;background:#C9CBD3;"></div>
<svg style="position:absolute;left:308.5px;top:698px;" width="15" height="12" viewBox="0 0 15 12"><path d="M14,0.5 L7,6" stroke="#1e1e1e" stroke-width="1.4"/><path d="M7,5 L9,7.5 L6,11 L1,11 L1,9.5 L4,6.5z" fill="#fff" stroke="#1e1e1e" stroke-width="1.1"/></svg>
<svg style="position:absolute;left:327.5px;top:702.5px;" width="6" height="4" viewBox="0 0 6 4"><path d="M0,0 H6 L3.0,3.5 Z" fill="#1e1e1e"/></svg>
<svg style="position:absolute;left:367px;top:701.5px;" width="5" height="6" viewBox="0 0 5 6"><path d="M4.5,0 L0,3 L4.5,6z" fill="#8E8E96"/></svg>
<div style="left:378.2px;top:699.5px;width:531.8px;height:8.2px;background:#C8C9D0;"></div>
<svg style="position:absolute;left:1033px;top:701px;" width="5" height="7" viewBox="0 0 5 7"><path d="M0,0 L5,3.5 L0,7z" fill="#8E8E96"/></svg>
<div style="left:3px;top:719px;width:1094px;height:21px;background:#3F4A90;"></div>
<svg style="position:absolute;left:4px;top:724.5px;" width="18" height="13" viewBox="0 0 18 13"><path d="M4,1.5 h12.5 l-3,10 h-12.5z" fill="none" stroke="#F0F2FA" stroke-width="1.4"/></svg>
<div style="left:29.5px;top:724px;font-size:11.8px;line-height:14px;color:#F4F6FC;white-space:pre;font-family:'Liberation Sans', sans-serif;-webkit-text-stroke:0.2px #F4F6FC;">Ready</div>
<div style="left:212.5px;top:724px;font-size:12.3px;line-height:14px;color:#F4F6FC;white-space:pre;font-family:'Liberation Sans', sans-serif;-webkit-text-stroke:0.2px #F4F6FC;">Ln 8</div>
<div style="left:310.7px;top:724px;font-size:12.5px;line-height:14px;color:#F4F6FC;white-space:pre;font-family:'Liberation Sans', sans-serif;-webkit-text-stroke:0.2px #F4F6FC;">Col 39</div>
<div style="left:409px;top:724px;font-size:12.0px;line-height:14px;color:#F4F6FC;white-space:pre;font-family:'Liberation Sans', sans-serif;-webkit-text-stroke:0.2px #F4F6FC;">Ch 39</div>
<div style="left:554.7px;top:725px;font-size:11.5px;line-height:12px;color:#F4F6FC;white-space:pre;font-family:'Liberation Sans', sans-serif;-webkit-text-stroke:0.2px #F4F6FC;">INS</div>
<div style="left:862px;top:724px;font-size:12.6px;line-height:14px;color:#F4F6FC;white-space:pre;font-family:'Liberation Sans', sans-serif;-webkit-text-stroke:0.2px #F4F6FC;">Add to Source Control</div>
<svg style="position:absolute;left:841px;top:725.5px;" width="11" height="11" viewBox="0 0 11 11"><path d="M5.5,11 V1.5 M1,5.5 L5.5,1 L10,5.5" fill="none" stroke="#F4F6FC" stroke-width="1.6"/></svg>
<svg style="position:absolute;left:994.5px;top:727.5px;" width="8" height="5" viewBox="0 0 8 5"><path d="M0,4.5 L4,0 L8,4.5z" fill="#F4F6FC"/></svg>
<svg style="position:absolute;left:1024.5px;top:724px;" width="14" height="14" viewBox="0 0 14 14"><path d="M7,0.5 C3.5,0.5 3,3.5 3,6 C3,8.5 1.5,9.5 1,10.5 H13 C12.5,9.5 11,8.5 11,6 C11,3.5 10.5,0.5 7,0.5z" fill="#E0E4F2"/><path d="M5,11.5 h4 v1.5 h-4z" fill="#E0E4F2"/></svg>
<svg style="position:absolute;left:1061.4px;top:720.3px;" width="20" height="20" viewBox="0 0 20 20"><circle cx="10" cy="10" r="9.6" fill="#F4F4F8"/><circle cx="10" cy="10" r="7.7" fill="#E8400C"/><path d="M8.3,6.8 L10.4,5.2 V14.8" fill="none" stroke="#FFF4E8" stroke-width="1.5"/></svg>
</body></html>
